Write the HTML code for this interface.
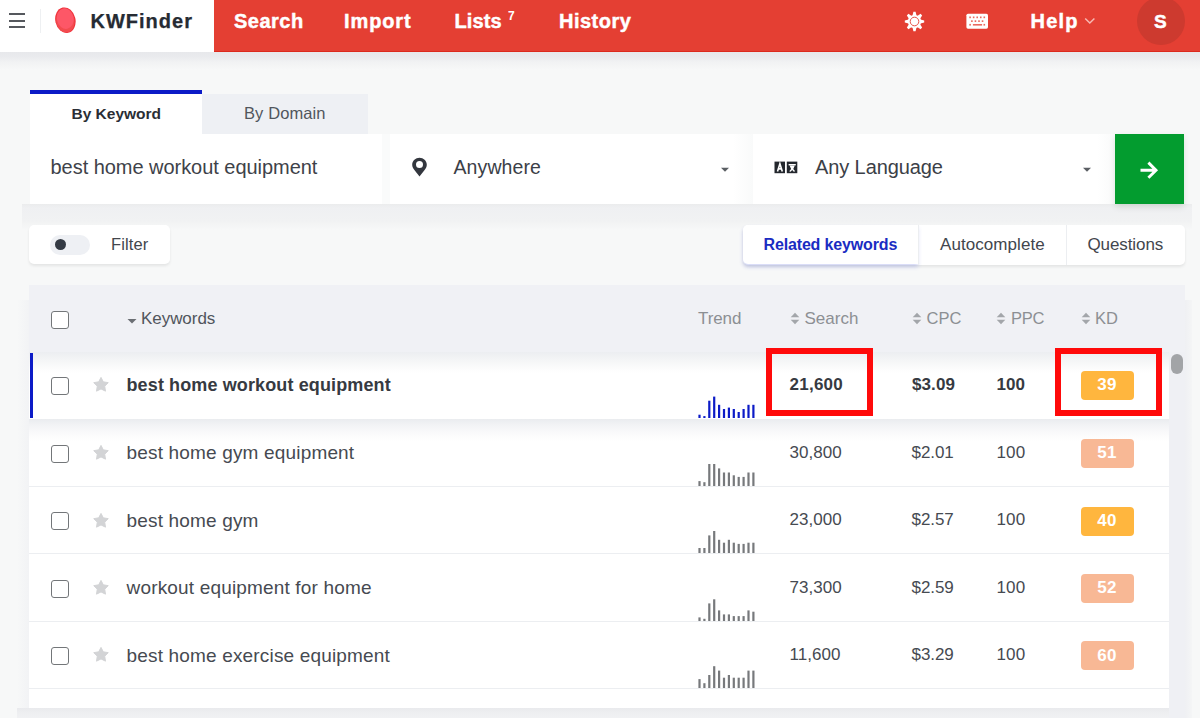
<!DOCTYPE html>
<html><head><meta charset="utf-8"><style>
html,body{margin:0;padding:0;width:1200px;height:718px;overflow:hidden;background:#f7f8f8;font-family:"Liberation Sans", sans-serif;position:relative}
.t{position:absolute;white-space:nowrap;line-height:1}
</style></head><body>
<div style="position:absolute;left:0px;top:52px;width:1200px;height:666px;background:#f7f8f8"></div>
<div style="position:absolute;left:0px;top:52px;width:1200px;height:18px;background:linear-gradient(#e7e8eb 0px,#eaebee 5px,#f1f2f3 10px,#f7f8f8 18px)"></div>
<div style="position:absolute;left:0px;top:0px;width:1200px;height:52px;background:#fff"></div>
<div style="position:absolute;left:214px;top:0px;width:986px;height:52px;background:#e43f33;border-bottom:1px solid #dc2a1e;box-sizing:border-box"></div>
<div style="position:absolute;left:8.5px;top:13px;width:16.5px;height:2px;background:#55585d"></div>
<div style="position:absolute;left:8.5px;top:20px;width:16.5px;height:2px;background:#55585d"></div>
<div style="position:absolute;left:8.5px;top:26px;width:16.5px;height:2px;background:#55585d"></div>
<div style="position:absolute;left:39.5px;top:9px;width:1px;height:24px;background:#eef0f2"></div>
<svg style="position:absolute;left:53px;top:6px" width="25" height="29" viewBox="0 0 25 29"><g transform="rotate(-12 12.4 14.2)"><ellipse cx="12.4" cy="14.2" rx="10.1" ry="12.9" fill="#f0313a"/><ellipse cx="12.2" cy="14.6" rx="9.2" ry="12" fill="#f24b4f"/><ellipse cx="12.6" cy="12.6" rx="8.4" ry="10.4" fill="#fd5767"/></g></svg>
<div class="t" style="left:90.50px;top:11.07px;font-size:20px;font-weight:700;color:#262b33;letter-spacing:1.0px;-webkit-text-stroke:0.25px #262b33">KWFinder</div>
<div class="t" style="left:234.00px;top:11.07px;font-size:20px;font-weight:700;color:#fff;letter-spacing:0.5px;-webkit-text-stroke:0.45px #fff">Search</div>
<div class="t" style="left:344.00px;top:11.07px;font-size:20px;font-weight:700;color:#fff;letter-spacing:0.9px;-webkit-text-stroke:0.45px #fff">Import</div>
<div class="t" style="left:454.50px;top:11.07px;font-size:20px;font-weight:700;color:#fff;letter-spacing:0.1px;-webkit-text-stroke:0.45px #fff">Lists</div>
<div class="t" style="left:508.00px;top:10.04px;font-size:12px;font-weight:700;color:#fff;letter-spacing:0px;">7</div>
<div class="t" style="left:559.00px;top:11.07px;font-size:20px;font-weight:700;color:#fff;letter-spacing:0.5px;-webkit-text-stroke:0.45px #fff">History</div>
<svg style="position:absolute;left:903px;top:9.5px" width="23" height="23" viewBox="-11.5 -11.5 23 23"><circle r="6.6" fill="#fff"/><polygon points="-2.2,-5 2.2,-5 1.1,-9.7 -1.1,-9.7" fill="#fff" transform="rotate(0)"/><polygon points="-2.2,-5 2.2,-5 1.1,-9.7 -1.1,-9.7" fill="#fff" transform="rotate(45)"/><polygon points="-2.2,-5 2.2,-5 1.1,-9.7 -1.1,-9.7" fill="#fff" transform="rotate(90)"/><polygon points="-2.2,-5 2.2,-5 1.1,-9.7 -1.1,-9.7" fill="#fff" transform="rotate(135)"/><polygon points="-2.2,-5 2.2,-5 1.1,-9.7 -1.1,-9.7" fill="#fff" transform="rotate(180)"/><polygon points="-2.2,-5 2.2,-5 1.1,-9.7 -1.1,-9.7" fill="#fff" transform="rotate(225)"/><polygon points="-2.2,-5 2.2,-5 1.1,-9.7 -1.1,-9.7" fill="#fff" transform="rotate(270)"/><polygon points="-2.2,-5 2.2,-5 1.1,-9.7 -1.1,-9.7" fill="#fff" transform="rotate(315)"/><circle r="4.3" fill="none" stroke="#e43f33" stroke-width="0.9"/></svg>
<svg style="position:absolute;left:966px;top:13px" width="23" height="16" viewBox="0 0 23 16"><rect x="0.4" y="0.7" width="21.6" height="15" rx="1.6" fill="#fff"/><rect x="3.30" y="3.5" width="1.6" height="1.7" fill="#ea6a60"/><rect x="6.85" y="3.5" width="1.6" height="1.7" fill="#ea6a60"/><rect x="10.40" y="3.5" width="1.6" height="1.7" fill="#ea6a60"/><rect x="13.95" y="3.5" width="1.6" height="1.7" fill="#ea6a60"/><rect x="17.50" y="3.5" width="1.6" height="1.7" fill="#ea6a60"/><rect x="5.10" y="7.3" width="1.6" height="1.7" fill="#ea6a60"/><rect x="8.65" y="7.3" width="1.6" height="1.7" fill="#ea6a60"/><rect x="12.20" y="7.3" width="1.6" height="1.7" fill="#ea6a60"/><rect x="15.75" y="7.3" width="1.6" height="1.7" fill="#ea6a60"/><rect x="3.3" y="10.9" width="1.6" height="1.7" fill="#ea6a60"/><rect x="6.9" y="11" width="9.2" height="1.6" fill="#ea6a60"/><rect x="17.5" y="10.9" width="1.6" height="1.7" fill="#ea6a60"/></svg>
<div class="t" style="left:1030.50px;top:11.27px;font-size:20px;font-weight:700;color:#fff;letter-spacing:1.2px;-webkit-text-stroke:0.45px #fff">Help</div>
<svg style="position:absolute;left:1084px;top:17px" width="12" height="8" viewBox="0 0 12 8"><polyline points="1.2,1.5 5.8,6 10.4,1.5" fill="none" stroke="#f7b9b3" stroke-width="1.5"/></svg>
<div style="position:absolute;left:1137px;top:-3px;width:48px;height:48px;background:#cd3a2f;border-radius:50%"></div>
<div class="t" style="left:1154.00px;top:12.12px;font-size:19px;font-weight:700;color:#fff;letter-spacing:0px;-webkit-text-stroke:0.45px #fff">S</div>
<div style="position:absolute;left:30px;top:90px;width:172px;height:4px;background:#0c1bc7"></div>
<div style="position:absolute;left:30px;top:93.5px;width:172px;height:40px;background:#fff"></div>
<div style="position:absolute;left:202px;top:94px;width:166px;height:39.5px;background:#eef0f4"></div>
<div class="t" style="left:71.50px;top:105.88px;font-size:15.5px;font-weight:700;color:#2a2e35;letter-spacing:0px;">By Keyword</div>
<div class="t" style="left:244.00px;top:105.23px;font-size:16.5px;font-weight:400;color:#51565d;letter-spacing:0.1px;">By Domain</div>
<div style="position:absolute;left:382px;top:133.5px;width:733px;height:70px;background:#fafbfb"></div>
<div style="position:absolute;left:22px;top:203.5px;width:1170px;height:26px;background:linear-gradient(#ebeced 0px,#eff0f2 4px,#f1f2f3 17px,#f7f8f8 26px)"></div>
<div style="position:absolute;left:30px;top:133.5px;width:352px;height:70px;background:#fff"></div>
<div class="t" style="left:50.50px;top:157.07px;font-size:20px;font-weight:400;color:#3e4249;letter-spacing:-0.04px;">best home workout equipment</div>
<div style="position:absolute;left:390px;top:133.5px;width:343px;height:70px;background:#fff"></div>
<div style="position:absolute;left:733px;top:133.5px;width:20px;height:70px;background:linear-gradient(90deg,#fff,#f9fafa)"></div>
<svg style="position:absolute;left:411px;top:157px" width="17" height="20" viewBox="0 0 17 20"><path fill-rule="evenodd" d="M8.5 0.7C4.6 0.7 1.2 3.7 1.2 7.7c0 2.1 0.9 3.6 2.2 5.3l5.1 6.6 5.1-6.6c1.3-1.7 2.2-3.2 2.2-5.3 0-4-3.4-7-7.3-7zM8.5 4.1a3.5 3.5 0 1 1 0 7 3.5 3.5 0 0 1 0-7z" fill="#33373e"/></svg>
<div class="t" style="left:453.50px;top:157.99px;font-size:19.5px;font-weight:400;color:#3b4047;letter-spacing:0.1px;">Anywhere</div>
<svg style="position:absolute;left:720px;top:167px" width="10" height="6" viewBox="0 0 10 6"><polygon points="1,0.8 9,0.8 5,4.8" fill="#5a5e63"/></svg>
<div style="position:absolute;left:753px;top:133.5px;width:344px;height:70px;background:#fff"></div>
<div style="position:absolute;left:1097px;top:133.5px;width:18px;height:70px;background:linear-gradient(90deg,#fff,#f9fafa)"></div>
<svg style="position:absolute;left:774px;top:161px" width="24" height="13" viewBox="0 0 24 13"><rect x="0.5" y="0.6" width="10.5" height="11.6" fill="#23272d"/><rect x="12.8" y="0.6" width="10.5" height="11.6" fill="#23272d"/><path d="M3.5 10.6 L5.9 2.8 L8.3 10.6 M4.5 7.9 H7.3" fill="none" stroke="#fff" stroke-width="1.6"/><path d="M14.6 3.7 H21.8" stroke="#fff" stroke-width="1.4"/><path d="M15.6 4.4 L20.8 4.4 L19.3 7.9 L21.2 10.3 L19.8 10.7 L18.2 8.9 L16.6 10.7 L15.2 10.3 L17.1 7.9 Z" fill="#fff"/></svg>
<div class="t" style="left:815.00px;top:157.07px;font-size:20px;font-weight:400;color:#3b4047;letter-spacing:-0.1px;">Any Language</div>
<svg style="position:absolute;left:1082px;top:167px" width="10" height="6" viewBox="0 0 10 6"><polygon points="1,0.8 9,0.8 5,4.8" fill="#5a5e63"/></svg>
<div style="position:absolute;left:1115px;top:133.5px;width:69px;height:70px;background:#039c2f;box-shadow:0 3px 6px rgba(0,60,0,0.12)"></div>
<svg style="position:absolute;left:1139px;top:160px" width="20" height="20" viewBox="0 0 20 20"><path d="M1.5 10.2h15.2M9.4 2.6l7.6 7.6-7.6 7.6" fill="none" stroke="#fff" stroke-width="2.9" stroke-linecap="butt" stroke-linejoin="miter"/></svg>
<div style="position:absolute;left:29px;top:225px;width:141px;height:39px;background:#fff;border-radius:5px;box-shadow:0 2px 3px rgba(0,0,0,0.08)"></div>
<div style="position:absolute;left:50px;top:235px;width:40px;height:19.5px;background:#eef0f4;border-radius:10px"></div>
<div style="position:absolute;left:55px;top:239px;width:11px;height:11px;background:#343a44;border-radius:50%"></div>
<div class="t" style="left:111.00px;top:236.03px;font-size:16.5px;font-weight:400;color:#42464d;letter-spacing:0.1px;">Filter</div>
<div style="position:absolute;left:743px;top:225px;width:442px;height:39.5px;background:#fff;border-radius:5px;box-shadow:0 2px 3px rgba(0,0,0,0.08)"></div>
<div style="position:absolute;left:743px;top:225px;width:175px;height:39px;background:#fff;border-radius:5px 0 0 5px;box-shadow:0 3px 4px rgba(40,60,210,0.2)"></div>
<div style="position:absolute;left:918px;top:225px;width:1px;height:39.5px;background:#eceef1"></div>
<div style="position:absolute;left:1065.5px;top:225px;width:1px;height:39.5px;background:#eceef1"></div>
<div class="t" style="left:763.50px;top:237.06px;font-size:16px;font-weight:700;color:#1a2cc2;letter-spacing:-0.15px;">Related keywords</div>
<div class="t" style="left:940.00px;top:235.61px;font-size:17px;font-weight:400;color:#42464d;letter-spacing:0.07px;">Autocomplete</div>
<div class="t" style="left:1087.50px;top:235.61px;font-size:17px;font-weight:400;color:#42464d;letter-spacing:-0.1px;">Questions</div>
<div style="position:absolute;left:17px;top:300px;width:12px;height:418px;background:linear-gradient(90deg,#f7f8f8,#f2f3f5)"></div>
<div style="position:absolute;left:17px;top:708px;width:1152px;height:10px;background:linear-gradient(#e9eaed,#edeef0 4px,#f0f1f3)"></div>
<div style="position:absolute;left:1185px;top:300px;width:7px;height:418px;background:linear-gradient(90deg,#eff0f3,#f4f5f6)"></div>
<div style="position:absolute;left:29px;top:285px;width:1156px;height:423px;background:#fff"></div>
<div style="position:absolute;left:29px;top:285px;width:1156px;height:67px;background:#f0f1f5"></div>
<div style="position:absolute;left:1169px;top:352px;width:16px;height:366px;background:#eff0f4"></div>
<div style="position:absolute;left:51px;top:311px;width:18px;height:18px;box-sizing:border-box;border:1.6px solid #737679;border-radius:3px;background:#fff"></div>
<svg style="position:absolute;left:127px;top:318px" width="10" height="7" viewBox="0 0 10 7"><polygon points="0.5,1 9.5,1 5,5.6" fill="#6b6f74"/></svg>
<div class="t" style="left:141.00px;top:310.11px;font-size:17px;font-weight:400;color:#51565c;letter-spacing:-0.05px;">Keywords</div>
<div class="t" style="left:698.00px;top:309.91px;font-size:17px;font-weight:400;color:#8c8f93;letter-spacing:-0.1px;">Trend</div>
<svg style="position:absolute;left:790px;top:312px" width="10" height="13" viewBox="0 0 10 13"><polygon points="5,0.8 9.3,5.3 0.7,5.3" fill="#a3a6aa"/><polygon points="5,12.2 9.3,7.7 0.7,7.7" fill="#a3a6aa"/></svg>
<div class="t" style="left:804.50px;top:309.91px;font-size:17px;font-weight:400;color:#8c8f93;letter-spacing:0px;">Search</div>
<svg style="position:absolute;left:912px;top:312px" width="10" height="13" viewBox="0 0 10 13"><polygon points="5,0.8 9.3,5.3 0.7,5.3" fill="#a3a6aa"/><polygon points="5,12.2 9.3,7.7 0.7,7.7" fill="#a3a6aa"/></svg>
<div class="t" style="left:926.50px;top:310.33px;font-size:16.5px;font-weight:400;color:#8c8f93;letter-spacing:0px;">CPC</div>
<svg style="position:absolute;left:996px;top:312px" width="10" height="13" viewBox="0 0 10 13"><polygon points="5,0.8 9.3,5.3 0.7,5.3" fill="#a3a6aa"/><polygon points="5,12.2 9.3,7.7 0.7,7.7" fill="#a3a6aa"/></svg>
<div class="t" style="left:1011.00px;top:310.33px;font-size:16.5px;font-weight:400;color:#8c8f93;letter-spacing:-0.2px;">PPC</div>
<svg style="position:absolute;left:1081px;top:312px" width="10" height="13" viewBox="0 0 10 13"><polygon points="5,0.8 9.3,5.3 0.7,5.3" fill="#a3a6aa"/><polygon points="5,12.2 9.3,7.7 0.7,7.7" fill="#a3a6aa"/></svg>
<div class="t" style="left:1095.00px;top:310.33px;font-size:16.5px;font-weight:400;color:#8c8f93;letter-spacing:0px;">KD</div>
<div style="position:absolute;left:29px;top:418.6px;width:1140px;height:22px;background:linear-gradient(#eaecef 0px,#f2f3f5 6px,#fafafb 14px,#fff 22px)"></div>
<div style="position:absolute;left:29px;top:352px;width:1140px;height:66.6px;background:linear-gradient(#eceef1 0px,#f4f5f6 8px,#fdfdfd 18px,#fff 22px)"></div>
<div style="position:absolute;left:29.5px;top:352.5px;width:3.8px;height:65.6px;background:#0c1bc7"></div>
<div style="position:absolute;left:51px;top:376.7px;width:18px;height:18px;box-sizing:border-box;border:1.6px solid #737679;border-radius:3px;background:#fff"></div>
<svg style="position:absolute;left:92.7px;top:377.00px" width="16" height="16" viewBox="0 0 16 16"><polygon points="8.00,0.40 10.29,4.84 15.23,5.65 11.71,9.21 12.47,14.15 8.00,11.90 3.53,14.15 4.29,9.21 0.77,5.65 5.71,4.84" fill="#d3d4d6" stroke="#d3d4d6" stroke-width="1" stroke-linejoin="round"/></svg>
<div class="t" style="left:126.50px;top:375.96px;font-size:18px;font-weight:700;color:#363a41;letter-spacing:0.12px;">best home workout equipment</div>
<div class="t" style="left:789.50px;top:375.81px;font-size:17px;font-weight:700;color:#363a41;letter-spacing:0.25px;">21,600</div>
<div class="t" style="left:912.00px;top:375.81px;font-size:17px;font-weight:700;color:#363a41;letter-spacing:0.1px;">$3.09</div>
<div class="t" style="left:996.50px;top:375.81px;font-size:17px;font-weight:700;color:#363a41;letter-spacing:0.1px;">100</div>
<svg style="position:absolute;left:694px;top:394.00px" width="66" height="24" viewBox="0 0 66 24"><rect x="4.40" y="20.70" width="2.2" height="3.30" fill="#0c1bc7"/><rect x="9.30" y="22.10" width="2.2" height="1.90" fill="#0c1bc7"/><rect x="14.20" y="6.70" width="2.2" height="17.30" fill="#0c1bc7"/><rect x="19.10" y="2.60" width="2.2" height="21.40" fill="#0c1bc7"/><rect x="24.00" y="10.80" width="2.2" height="13.20" fill="#0c1bc7"/><rect x="28.90" y="15.00" width="2.2" height="9.00" fill="#0c1bc7"/><rect x="33.80" y="13.60" width="2.2" height="10.40" fill="#0c1bc7"/><rect x="38.70" y="15.00" width="2.2" height="9.00" fill="#0c1bc7"/><rect x="43.60" y="18.00" width="2.2" height="6.00" fill="#0c1bc7"/><rect x="48.50" y="15.00" width="2.2" height="9.00" fill="#0c1bc7"/><rect x="53.40" y="10.80" width="2.2" height="13.20" fill="#0c1bc7"/><rect x="58.30" y="10.80" width="2.2" height="13.20" fill="#0c1bc7"/></svg>
<div style="position:absolute;left:1081px;top:371.00px;width:52.5px;height:29px;background:#ffb63e;border-radius:4px"></div>
<div class="t" style="left:1097.30px;top:376.11px;font-size:17px;font-weight:700;color:#fff;letter-spacing:0.3px;">39</div>
<div style="position:absolute;left:29px;top:485.8px;width:1140px;height:1px;background:#eceef1"></div>
<div style="position:absolute;left:51px;top:444.7px;width:18px;height:18px;box-sizing:border-box;border:1.6px solid #737679;border-radius:3px;background:#fff"></div>
<svg style="position:absolute;left:92.7px;top:445.00px" width="16" height="16" viewBox="0 0 16 16"><polygon points="8.00,0.40 10.29,4.84 15.23,5.65 11.71,9.21 12.47,14.15 8.00,11.90 3.53,14.15 4.29,9.21 0.77,5.65 5.71,4.84" fill="#d3d4d6" stroke="#d3d4d6" stroke-width="1" stroke-linejoin="round"/></svg>
<div class="t" style="left:126.50px;top:443.12px;font-size:19px;font-weight:400;color:#464a51;letter-spacing:0.17px;">best home gym equipment</div>
<div class="t" style="left:789.50px;top:443.81px;font-size:17px;font-weight:400;color:#464a51;letter-spacing:0.02px;">30,800</div>
<div class="t" style="left:911.50px;top:443.81px;font-size:17px;font-weight:400;color:#464a51;letter-spacing:-0.07px;">$2.01</div>
<div class="t" style="left:996.50px;top:443.81px;font-size:17px;font-weight:400;color:#464a51;letter-spacing:0.15px;">100</div>
<svg style="position:absolute;left:694px;top:461.80px" width="66" height="24" viewBox="0 0 66 24"><rect x="4.40" y="19.10" width="2.2" height="4.90" fill="#77797c"/><rect x="9.30" y="20.20" width="2.2" height="3.80" fill="#77797c"/><rect x="14.20" y="2.00" width="2.2" height="22.00" fill="#77797c"/><rect x="19.10" y="2.00" width="2.2" height="22.00" fill="#77797c"/><rect x="24.00" y="6.40" width="2.2" height="17.60" fill="#77797c"/><rect x="28.90" y="10.50" width="2.2" height="13.50" fill="#77797c"/><rect x="33.80" y="10.50" width="2.2" height="13.50" fill="#77797c"/><rect x="38.70" y="13.30" width="2.2" height="10.70" fill="#77797c"/><rect x="43.60" y="14.90" width="2.2" height="9.10" fill="#77797c"/><rect x="48.50" y="14.90" width="2.2" height="9.10" fill="#77797c"/><rect x="53.40" y="10.50" width="2.2" height="13.50" fill="#77797c"/><rect x="58.30" y="10.50" width="2.2" height="13.50" fill="#77797c"/></svg>
<div style="position:absolute;left:1081px;top:439.00px;width:52.5px;height:29px;background:#f8b895;border-radius:4px"></div>
<div class="t" style="left:1097.30px;top:444.11px;font-size:17px;font-weight:700;color:#fff;letter-spacing:0.3px;">51</div>
<div style="position:absolute;left:29px;top:553.3px;width:1140px;height:1px;background:#eceef1"></div>
<div style="position:absolute;left:51px;top:512.3px;width:18px;height:18px;box-sizing:border-box;border:1.6px solid #737679;border-radius:3px;background:#fff"></div>
<svg style="position:absolute;left:92.7px;top:512.60px" width="16" height="16" viewBox="0 0 16 16"><polygon points="8.00,0.40 10.29,4.84 15.23,5.65 11.71,9.21 12.47,14.15 8.00,11.90 3.53,14.15 4.29,9.21 0.77,5.65 5.71,4.84" fill="#d3d4d6" stroke="#d3d4d6" stroke-width="1" stroke-linejoin="round"/></svg>
<div class="t" style="left:126.50px;top:510.72px;font-size:19px;font-weight:400;color:#464a51;letter-spacing:0.17px;">best home gym</div>
<div class="t" style="left:789.50px;top:511.41px;font-size:17px;font-weight:400;color:#464a51;letter-spacing:0.02px;">23,000</div>
<div class="t" style="left:911.50px;top:511.41px;font-size:17px;font-weight:400;color:#464a51;letter-spacing:-0.07px;">$2.57</div>
<div class="t" style="left:996.50px;top:511.41px;font-size:17px;font-weight:400;color:#464a51;letter-spacing:0.15px;">100</div>
<svg style="position:absolute;left:694px;top:529.10px" width="66" height="24" viewBox="0 0 66 24"><rect x="4.40" y="19.00" width="2.2" height="5.00" fill="#77797c"/><rect x="9.30" y="19.00" width="2.2" height="5.00" fill="#77797c"/><rect x="14.20" y="6.40" width="2.2" height="17.60" fill="#77797c"/><rect x="19.10" y="2.00" width="2.2" height="22.00" fill="#77797c"/><rect x="24.00" y="10.80" width="2.2" height="13.20" fill="#77797c"/><rect x="28.90" y="13.70" width="2.2" height="10.30" fill="#77797c"/><rect x="33.80" y="10.80" width="2.2" height="13.20" fill="#77797c"/><rect x="38.70" y="13.70" width="2.2" height="10.30" fill="#77797c"/><rect x="43.60" y="14.90" width="2.2" height="9.10" fill="#77797c"/><rect x="48.50" y="14.90" width="2.2" height="9.10" fill="#77797c"/><rect x="53.40" y="13.70" width="2.2" height="10.30" fill="#77797c"/><rect x="58.30" y="13.70" width="2.2" height="10.30" fill="#77797c"/></svg>
<div style="position:absolute;left:1081px;top:506.60px;width:52.5px;height:29px;background:#ffb63e;border-radius:4px"></div>
<div class="t" style="left:1097.30px;top:511.71px;font-size:17px;font-weight:700;color:#fff;letter-spacing:0.3px;">40</div>
<div style="position:absolute;left:29px;top:620.8px;width:1140px;height:1px;background:#eceef1"></div>
<div style="position:absolute;left:51px;top:579.7px;width:18px;height:18px;box-sizing:border-box;border:1.6px solid #737679;border-radius:3px;background:#fff"></div>
<svg style="position:absolute;left:92.7px;top:580.00px" width="16" height="16" viewBox="0 0 16 16"><polygon points="8.00,0.40 10.29,4.84 15.23,5.65 11.71,9.21 12.47,14.15 8.00,11.90 3.53,14.15 4.29,9.21 0.77,5.65 5.71,4.84" fill="#d3d4d6" stroke="#d3d4d6" stroke-width="1" stroke-linejoin="round"/></svg>
<div class="t" style="left:126.50px;top:578.12px;font-size:19px;font-weight:400;color:#464a51;letter-spacing:0.17px;">workout equipment for home</div>
<div class="t" style="left:789.50px;top:578.81px;font-size:17px;font-weight:400;color:#464a51;letter-spacing:0.02px;">73,300</div>
<div class="t" style="left:911.50px;top:578.81px;font-size:17px;font-weight:400;color:#464a51;letter-spacing:-0.07px;">$2.59</div>
<div class="t" style="left:996.50px;top:578.81px;font-size:17px;font-weight:400;color:#464a51;letter-spacing:0.15px;">100</div>
<svg style="position:absolute;left:694px;top:596.80px" width="66" height="24" viewBox="0 0 66 24"><rect x="4.40" y="20.40" width="2.2" height="3.60" fill="#77797c"/><rect x="9.30" y="21.80" width="2.2" height="2.20" fill="#77797c"/><rect x="14.20" y="6.40" width="2.2" height="17.60" fill="#77797c"/><rect x="19.10" y="2.30" width="2.2" height="21.70" fill="#77797c"/><rect x="24.00" y="13.40" width="2.2" height="10.60" fill="#77797c"/><rect x="28.90" y="17.40" width="2.2" height="6.60" fill="#77797c"/><rect x="33.80" y="17.40" width="2.2" height="6.60" fill="#77797c"/><rect x="38.70" y="19.10" width="2.2" height="4.90" fill="#77797c"/><rect x="43.60" y="19.10" width="2.2" height="4.90" fill="#77797c"/><rect x="48.50" y="19.10" width="2.2" height="4.90" fill="#77797c"/><rect x="53.40" y="13.40" width="2.2" height="10.60" fill="#77797c"/><rect x="58.30" y="14.70" width="2.2" height="9.30" fill="#77797c"/></svg>
<div style="position:absolute;left:1081px;top:574.00px;width:52.5px;height:29px;background:#f8b895;border-radius:4px"></div>
<div class="t" style="left:1097.30px;top:579.11px;font-size:17px;font-weight:700;color:#fff;letter-spacing:0.3px;">52</div>
<div style="position:absolute;left:29px;top:688.1px;width:1140px;height:1px;background:#eceef1"></div>
<div style="position:absolute;left:51px;top:647.1px;width:18px;height:18px;box-sizing:border-box;border:1.6px solid #737679;border-radius:3px;background:#fff"></div>
<svg style="position:absolute;left:92.7px;top:647.40px" width="16" height="16" viewBox="0 0 16 16"><polygon points="8.00,0.40 10.29,4.84 15.23,5.65 11.71,9.21 12.47,14.15 8.00,11.90 3.53,14.15 4.29,9.21 0.77,5.65 5.71,4.84" fill="#d3d4d6" stroke="#d3d4d6" stroke-width="1" stroke-linejoin="round"/></svg>
<div class="t" style="left:126.50px;top:645.52px;font-size:19px;font-weight:400;color:#464a51;letter-spacing:0.17px;">best home exercise equipment</div>
<div class="t" style="left:789.50px;top:646.21px;font-size:17px;font-weight:400;color:#464a51;letter-spacing:0.02px;">11,600</div>
<div class="t" style="left:911.50px;top:646.21px;font-size:17px;font-weight:400;color:#464a51;letter-spacing:-0.07px;">$3.29</div>
<div class="t" style="left:996.50px;top:646.21px;font-size:17px;font-weight:400;color:#464a51;letter-spacing:0.15px;">100</div>
<svg style="position:absolute;left:694px;top:663.90px" width="66" height="24" viewBox="0 0 66 24"><rect x="4.40" y="15.10" width="2.2" height="8.90" fill="#77797c"/><rect x="9.30" y="19.20" width="2.2" height="4.80" fill="#77797c"/><rect x="14.20" y="11.00" width="2.2" height="13.00" fill="#77797c"/><rect x="19.10" y="2.20" width="2.2" height="21.80" fill="#77797c"/><rect x="24.00" y="6.60" width="2.2" height="17.40" fill="#77797c"/><rect x="28.90" y="13.70" width="2.2" height="10.30" fill="#77797c"/><rect x="33.80" y="11.00" width="2.2" height="13.00" fill="#77797c"/><rect x="38.70" y="13.70" width="2.2" height="10.30" fill="#77797c"/><rect x="43.60" y="13.70" width="2.2" height="10.30" fill="#77797c"/><rect x="48.50" y="13.70" width="2.2" height="10.30" fill="#77797c"/><rect x="53.40" y="6.60" width="2.2" height="17.40" fill="#77797c"/><rect x="58.30" y="6.60" width="2.2" height="17.40" fill="#77797c"/></svg>
<div style="position:absolute;left:1081px;top:641.40px;width:52.5px;height:29px;background:#f8b895;border-radius:4px"></div>
<div class="t" style="left:1097.30px;top:646.51px;font-size:17px;font-weight:700;color:#fff;letter-spacing:0.3px;">60</div>
<div style="position:absolute;left:1171px;top:353.5px;width:12px;height:20px;background:#a2a4a7;border-radius:6px"></div>
<div style="position:absolute;left:765.7px;top:348.2px;width:107px;height:67.7px;box-sizing:border-box;border:6.2px solid #ff0a0a"></div>
<div style="position:absolute;left:1054.7px;top:348px;width:107.8px;height:68.3px;box-sizing:border-box;border:6.2px solid #ff0a0a"></div>
</body></html>
